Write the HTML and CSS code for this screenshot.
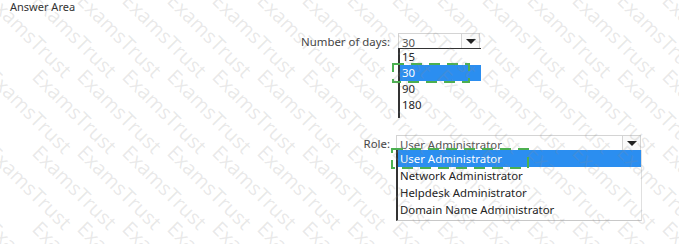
FILE: index.html
```html
<!DOCTYPE html>
<html lang="en">
<head>
    <meta charset="UTF-8">
    <title>Answer Area</title>
    <link rel="stylesheet" href="styles.css">
</head>
<body>
    <div class="page">
        <div class="title">Answer Area</div>

        <div class="field days">
            <span class="label">Number of days:</span>
            <div class="dropdown">
                <div class="select">
                    <span class="value">30</span>
                    <span class="arrow"></span>
                </div>
                <div class="options">
                    <div class="option">15</div>
                    <div class="option selected">30</div>
                    <div class="option">90</div>
                    <div class="option">180</div>
                </div>
                <svg class="answer-box" width="80" height="22">
                    <rect x="1" y="1" width="76" height="18"></rect>
                </svg>
            </div>
        </div>

        <div class="field role">
            <span class="label">Role:</span>
            <div class="dropdown">
                <div class="select">
                    <span class="value">User Administrator</span>
                    <span class="arrow"></span>
                </div>
                <div class="options">
                    <div class="option selected">User Administrator</div>
                    <div class="option">Network Administrator</div>
                    <div class="option">Helpdesk Administrator</div>
                    <div class="option">Domain Name Administrator</div>
                </div>
                <svg class="answer-box" width="140" height="23">
                    <rect x="1" y="1" width="136" height="19"></rect>
                </svg>
            </div>
        </div>
    </div>

    <div class="watermark" id="watermark"></div>

    <script>
        // Fill the background with the diagonal watermark
        const watermark = document.getElementById("watermark");
        for (let row = 0; row < 5; row++) {
            for (let col = 0; col < 17; col++) {
                const mark = document.createElement("span");
                mark.className = "mark";
                mark.textContent = "ExamsTrust";
                mark.style.left = (col * 45 - 2) + "px";
                mark.style.top = (row * 76 - 10) + "px";
                watermark.appendChild(mark);
            }
        }
    </script>
</body>
</html>
```

FILE: styles.css
```css
* {
    margin: 0;
    padding: 0;
    box-sizing: border-box;
}

body {
    font-family: "Noto Sans", "Open Sans", sans-serif;
    background: #fff;
    color: #222;
    width: 679px;
    height: 244px;
    overflow: hidden;
    position: relative;
}

.page {
    position: relative;
    z-index: 1;
}

.title {
    font-size: 11px;
    line-height: 14px;
    color: #333;
    padding: 0 0 0 10px;
}

.field {
    display: flex;
    align-items: flex-start;
}

.days {
    margin-top: 19px;
}

.role {
    margin-top: 17px;
}

.label {
    width: 390px;
    text-align: right;
    font-size: 11.4px;
    line-height: 15px;
    color: #444;
    padding-top: 1px;
}

.days .dropdown {
    margin-left: 8px;
    width: 83px;
}

.role .dropdown {
    margin-left: 6px;
    width: 246px;
}

.dropdown {
    position: relative;
}

.select {
    display: flex;
    height: 15px;
    border: 1px solid #d4d4d4;
    border-bottom: none;
    margin-right: 1px;
    background: rgba(255, 255, 255, 0.6);
}

.value {
    flex: 1;
    font-size: 11.4px;
    line-height: 17px;
    color: #555;
    padding-left: 3px;
    overflow: hidden;
    white-space: nowrap;
}

.arrow {
    width: 18px;
    border-left: 1px solid #d4d4d4;
    background: #fafafa;
    display: flex;
    align-items: center;
    justify-content: center;
}

.arrow::after {
    content: "";
    border-left: 5px solid transparent;
    border-right: 5px solid transparent;
    border-top: 5px solid #222;
}

.options {
    border-left: 2px solid #333;
}

.days .options {
    border-top: 1px solid #333;
    padding-bottom: 5px;
}

.role .options {
    border-bottom: 1px solid #c8c8c8;
    border-right: 1px solid #e0e0e0;
    padding-bottom: 2px;
}

.option {
    font-size: 11.4px;
    color: #222;
    padding-left: 2px;
    white-space: nowrap;
}

.days .option {
    height: 16px;
    line-height: 16px;
}

.role .option {
    height: 17px;
    line-height: 17px;
}

.option.selected {
    background: #2b8ef0;
    color: #fff;
}

.answer-box {
    position: absolute;
    fill: none;
    stroke: #4cb050;
    stroke-width: 2;
    stroke-dasharray: 11 7;
}

.days .answer-box {
    left: -6px;
    top: 30px;
}

.role .answer-box {
    left: -5px;
    top: 13px;
}

.watermark {
    position: absolute;
    inset: 0;
    z-index: 2;
    pointer-events: none;
    overflow: hidden;
}

.mark {
    position: absolute;
    font-family: "Open Sans", sans-serif;
    font-size: 20px;
    line-height: 20px;
    color: rgba(140, 140, 140, 0.2);
    transform-origin: 0 0;
    transform: rotate(45deg);
    white-space: nowrap;
}
```
